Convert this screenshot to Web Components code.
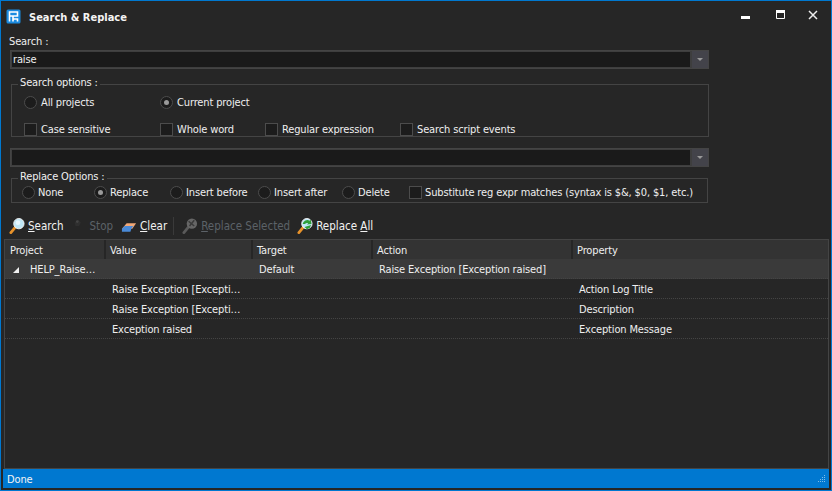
<!DOCTYPE html>
<html>
<head>
<meta charset="utf-8">
<title>Search & Replace</title>
<style>
  html, body { margin: 0; padding: 0; background: #262626; }
  body { font: 11px "DejaVu Sans Condensed", "DejaVu Sans", sans-serif; font-stretch: condensed; letter-spacing: -0.14px; color: #f0f0f0; }
  svg { display: block; }
</style>
</head>
<body>
<template id="window-tpl">
  <style>
    :host { display: flex; flex-direction: column; box-sizing: border-box; width: 832px; height: 491px; background: #262626; border: 1px solid #0078d0; overflow: hidden; }
    main { flex: 1; display: flex; flex-direction: column; min-height: 0; padding: 0 2px 0 2px; }
  </style>
  <slot name="title"></slot>
  <main><slot></slot></main>
  <slot name="status"></slot>
</template>

<template id="title-tpl">
  <style>
    :host { display: flex; align-items: center; height: 31px; flex: none; padding: 0 0 0 5px; font-weight: bold; letter-spacing: 0; color: #f4f4f4; }
    .name { flex: 1; padding-left: 7px; padding-top: 1px; }
    .btns { display: flex; margin-right: 1px; margin-top: -4px; }
    .btns span { display: flex; width: 33px; height: 20px; align-items: center; justify-content: center; }
  </style>
  <slot name="logo"></slot>
  <div class="name"><slot></slot></div>
  <div class="btns">
    <span><svg style="margin-left:-5px" width="11" height="11" viewBox="0 0 11 11"><rect x="1" y="7" width="9" height="3" fill="#fff"/></svg></span>
    <span><svg width="11" height="11" viewBox="0 0 11 11"><path d="M1.5 1.5h8v8h-8z" fill="none" stroke="#fff"/><rect x="1" y="1" width="9" height="3" fill="#fff"/></svg></span>
    <span><svg width="11" height="11" viewBox="0 0 11 11"><path d="M1 2l8 8M9 2l-8 8" stroke="#eee" stroke-width="1.5"/></svg></span>
  </div>
</template>

<template id="combo-tpl">
  <style>
    :host { display: flex; box-sizing: border-box; height: 19px; width: 699px; margin-left: 7px; background: #3e3e3e; border: 1px solid #444; padding: 1px; }
    .val { flex: 1; background: #1a1a1a; color: #f0f0f0; line-height: 15px; padding-left: 1px; white-space: nowrap; }
    .arrow { width: 16px; display: flex; align-items: center; justify-content: center; background: #43434a; margin: -1px -1px -1px 2px; }
    .arrow i { border: 3px solid transparent; border-top: 3px solid #999; border-bottom: 0; display: block; width: 0; height: 0; }
  </style>
  <div class="val"><slot></slot></div>
  <div class="arrow"><i></i></div>
</template>

<template id="group-tpl">
  <style>
    :host { display: block; }
    fieldset { margin: 0; padding: 0; border: 1px solid #444; min-width: 0; height: 100%; box-sizing: border-box; }
    legend { margin-left: 6px; padding: 1px 2px 3px; line-height: 12px; color: #f0f0f0; }
  </style>
  <fieldset>
    <legend></legend>
    <slot></slot>
  </fieldset>
</template>

<template id="option-tpl">
  <style>
    :host { display: inline-flex; align-items: center; gap: var(--opt-gap, 4px); white-space: nowrap; color: #efefef; }
    .box { box-sizing: border-box; width: 13px; height: 13px; border: 1px solid #4c4c4c; background: #1c1c1c; flex: none; display: flex; align-items: center; justify-content: center; }
    :host([type="radio"]) .box { border-radius: 50%; }
    :host([checked]) .box::after { content: ""; width: 5px; height: 5px; border-radius: 50%; background: #9a9a9a; }
  </style>
  <span class="box"></span><slot></slot>
</template>

<template id="tool-tpl">
  <style>
    :host { display: inline-flex; align-items: center; gap: 3px; height: 22px; white-space: nowrap; font-size: 11.5px; letter-spacing: 0; color: #f2f2f2; }
    :host([disabled]) { color: #5c6268; }
  </style>
  <slot name="icon"></slot><slot></slot>
</template>

<template id="grid-tpl">
  <style>
    :host { display: block; flex: 1; min-height: 0; box-sizing: border-box; margin: 0 0 0 1px; width: 825px; border: 1px solid #444; background: #262626; overflow: hidden; }
  </style>
  <slot></slot>
</template>

<template id="row-tpl">
  <style>
    :host { display: grid; grid-template-columns: 100px 147px 120px 200px 1fr; box-sizing: border-box; height: 20px; padding-top: 2px; align-items: center; color: #efefef; border-bottom: 1px dotted #444; }
    :host([head]) { background: #333; border-bottom: 0; height: 19px; padding-top: 0; }
    :host([group]) { background: #3a3a3a; }
    ::slotted(span) { padding-left: 7px; white-space: nowrap; overflow: hidden; }
    :host([head]) ::slotted(span) { padding-left: 5px; line-height: 21px; height: 19px; margin-right: -1px; border-right: 2px solid #262626; }
  </style>
  <slot></slot>
</template>

<template id="status-tpl">
  <style>
    :host { display: flex; align-items: center; justify-content: space-between; flex: none; box-sizing: border-box; height: 19px; margin: 0 2px 2px 2px; padding: 1px 3px 0 4px; background: #0078d0; color: #f4f4f4; }
    span { padding-top: 1px; }
  </style>
  <span><slot></slot></span>
  <svg width="9" height="9" viewBox="0 0 9 9" fill="#7fbce8">
    <rect x="7" y="0" width="1" height="1"/><rect x="5" y="2" width="1" height="1"/><rect x="7" y="2" width="1" height="1"/>
    <rect x="3" y="4" width="1" height="1"/><rect x="5" y="4" width="1" height="1"/><rect x="7" y="4" width="1" height="1"/>
    <rect x="1" y="6" width="1" height="1"/><rect x="3" y="6" width="1" height="1"/><rect x="5" y="6" width="1" height="1"/><rect x="7" y="6" width="1" height="1"/>
  </svg>
</template>

<script>
  // every element is the same: clone its template into an open shadow root
  function define (name, tplId, extra) {
    customElements.define(name, class extends HTMLElement {
      constructor () {
        super()
        this.attachShadow({ mode: 'open' })
          .appendChild(document.getElementById(tplId).content.cloneNode(true))
      }

      connectedCallback () {
        if (extra) extra.call(this)
      }
    })
  }

  define('sr-window', 'window-tpl')
  define('sr-title', 'title-tpl')
  define('sr-combo', 'combo-tpl')
  define('sr-group', 'group-tpl', function () {
    this.shadowRoot.querySelector('legend').textContent = this.getAttribute('label')
  })
  define('sr-option', 'option-tpl')
  define('sr-tool', 'tool-tpl')
  define('sr-grid', 'grid-tpl')
  define('sr-row', 'row-tpl')
  define('sr-status', 'status-tpl')
</script>

<sr-window>
  <sr-title slot="title">
    <svg slot="logo" width="16" height="16" viewBox="0 0 16 16">
      <rect x="0.5" y="0.5" width="14" height="14" rx="1.5" fill="#1b8be0"/>
      <path d="M3.5 12.5V3H11.5V7H3.5M7 7V12.5M7 10H11.5V12.5" fill="none" stroke="#fff" stroke-width="1.6"/>
    </svg>
    Search &amp; Replace
  </sr-title>

  <div style="margin:3px 0 1px 6px;line-height:14px;color:#efefef">Search :</div>
  <sr-combo>raise</sr-combo>

  <sr-group label="Search options :" style="margin:7px 0 0 8px;width:698px;height:61px">
    <div style="display:grid;grid-template-columns:136px 105px 135px 1fr;grid-template-rows:27px 27px;align-items:center;padding-left:12px;margin-top:-3px">
      <sr-option type="radio" style="grid-column:1">All projects</sr-option>
      <sr-option type="radio" checked style="grid-column:2 / span 3">Current project</sr-option>
      <sr-option>Case sensitive</sr-option>
      <sr-option>Whole word</sr-option>
      <sr-option>Regular expression</sr-option>
      <sr-option>Search script events</sr-option>
    </div>
  </sr-group>

  <div style="height:11px;flex:none"></div>
  <sr-combo></sr-combo>

  <sr-group label="Replace Options :" style="margin:3px 0 0 8px;width:697px;height:33px;--opt-gap:3px">
    <div style="display:grid;grid-template-columns:72px 76px 88px 84px 67px 1fr;align-items:center;padding-left:10px;height:22px;margin-top:-5px">
      <sr-option type="radio">None</sr-option>
      <sr-option type="radio" checked>Replace</sr-option>
      <sr-option type="radio">Insert before</sr-option>
      <sr-option type="radio">Insert after</sr-option>
      <sr-option type="radio">Delete</sr-option>
      <sr-option>Substitute reg expr matches (syntax is $&amp;, $0, $1, etc.)</sr-option>
    </div>
  </sr-group>

  <div style="display:flex;align-items:center;height:22px;flex:none;margin:12px 0 2px 6px;gap:8px">
    <sr-tool>
      <svg slot="icon" width="16" height="18" viewBox="0 0 17 18"><path d="M2 16l5-6" stroke="#e8922a" stroke-width="3" stroke-linecap="round"/><circle cx="10.5" cy="6.5" r="5.5" fill="#bfe8f8" stroke="#f2f2f2"/><circle cx="9.5" cy="5.5" r="2.5" fill="#e8f8ff"/></svg>
      <span><u>S</u>earch</span>
    </sr-tool>
    <sr-tool disabled>
      <svg slot="icon" width="15" height="18" viewBox="0 0 17 18"><path d="M3 5l4-3 3 3-2 4-4 0z" fill="#2f2f2f"/><circle cx="6" cy="4" r="1.5" fill="#444"/></svg>
      <span>Stop</span>
    </sr-tool>
    <sr-tool>
      <svg slot="icon" width="16" height="18" viewBox="0 0 17 18"><path d="M1 12l5-6h10l-4 6z" fill="#f0a878"/><path d="M1 12l3-3h9l-2 3-1 3H1z" fill="#4a8ad8"/></svg>
      <span><u>C</u>lear</span>
    </sr-tool>
    <span style="width:1px;height:18px;background:#3a3a3a;margin:0 0 0 -2px"></span>
    <sr-tool disabled>
      <svg slot="icon" width="16" height="18" viewBox="0 0 17 18"><path d="M2 16l5-6" stroke="#5a5a5a" stroke-width="3" stroke-linecap="round"/><circle cx="10.5" cy="6.5" r="5.5" fill="#666"/><path d="M7 4l6 5M13 3l-5 6" stroke="#3a3a3a" stroke-width="1.6"/></svg>
      <span><u>R</u>eplace Selected</span>
    </sr-tool>
    <sr-tool style="margin-left:-1px">
      <svg slot="icon" width="16" height="18" viewBox="0 0 17 18"><path d="M2 16l5-6" stroke="#e8922a" stroke-width="3" stroke-linecap="round"/><circle cx="10.5" cy="6.5" r="5.5" fill="#bfe8f8" stroke="#f2f2f2"/><path d="M6 7a5 5 0 0 1 7.5-3.5l1-1.5 1 5-5 .5 1.5-1.5a3 3 0 0 0-3.5 1zM8 10l7-2-1.5 3-3 1.5z" fill="#2f9f3a"/></svg>
      <span>Replace <u>A</u>ll</span>
    </sr-tool>
  </div>

  <sr-grid>
    <sr-row head><span>Project</span><span>Value</span><span>Target</span><span>Action</span><span style="border-right:0">Property</span></sr-row>
    <sr-row group>
      <span style="display:flex;align-items:center;gap:10px;padding-left:7px"><svg width="8" height="8" viewBox="0 0 8 8"><path d="M7 1v6H1z" fill="#f0f0f0"/></svg>HELP_Raise…</span>
      <span></span><span>Default</span><span>Raise Exception [Exception raised]</span><span></span>
    </sr-row>
    <sr-row><span></span><span>Raise Exception [Excepti…</span><span></span><span></span><span>Action Log Title</span></sr-row>
    <sr-row><span></span><span>Raise Exception [Excepti…</span><span></span><span></span><span>Description</span></sr-row>
    <sr-row><span></span><span>Exception raised</span><span></span><span></span><span>Exception Message</span></sr-row>
  </sr-grid>

  <sr-status slot="status">Done</sr-status>
</sr-window>
</body>
</html>
